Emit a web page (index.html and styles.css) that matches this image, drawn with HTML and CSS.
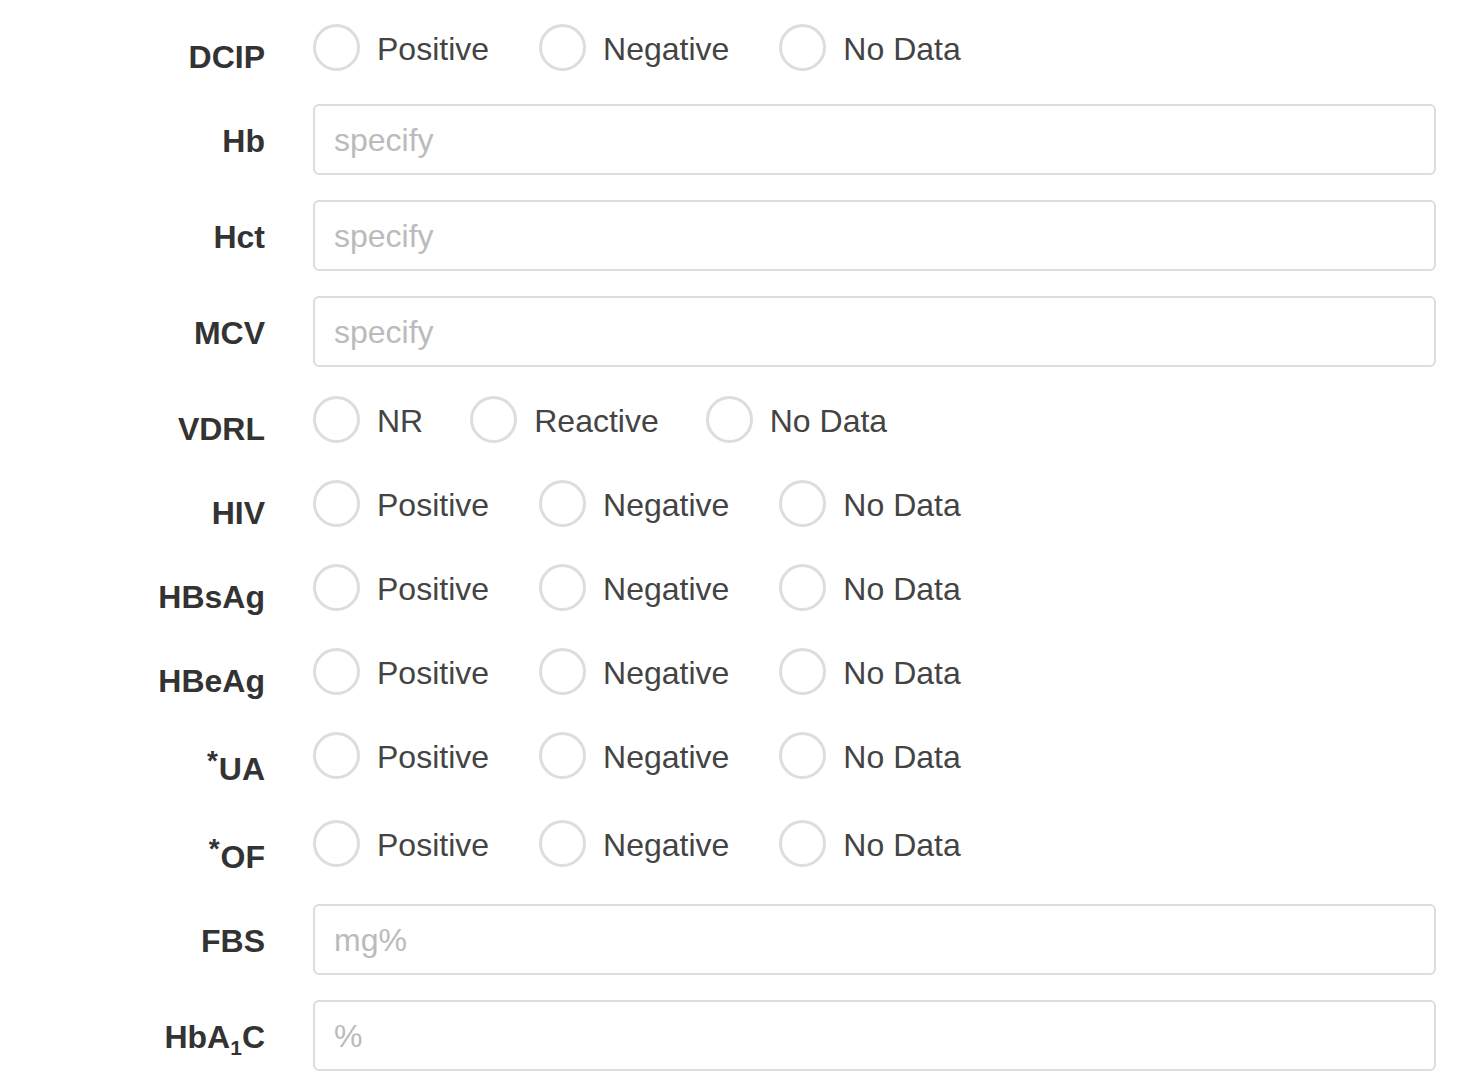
FILE: index.html
```html
<!DOCTYPE html>
<html>
<head>
<meta charset="utf-8">
<link rel="stylesheet" href="styles.css">
</head>
<body>
<form class="form">
  <div class="row row-radio">
    <div class="label">DCIP</div>
    <div class="field options">
      <label class="option"><span class="circle"></span><span class="text">Positive</span></label>
      <label class="option"><span class="circle"></span><span class="text">Negative</span></label>
      <label class="option"><span class="circle"></span><span class="text">No Data</span></label>
    </div>
  </div>
  <div class="row row-input">
    <div class="label">Hb</div>
    <div class="field"><input class="input" type="text" placeholder="specify"></div>
  </div>
  <div class="row row-input">
    <div class="label">Hct</div>
    <div class="field"><input class="input" type="text" placeholder="specify"></div>
  </div>
  <div class="row row-input">
    <div class="label">MCV</div>
    <div class="field"><input class="input" type="text" placeholder="specify"></div>
  </div>
  <div class="row row-radio">
    <div class="label">VDRL</div>
    <div class="field options options-tight">
      <label class="option"><span class="circle"></span><span class="text">NR</span></label>
      <label class="option"><span class="circle"></span><span class="text">Reactive</span></label>
      <label class="option"><span class="circle"></span><span class="text">No Data</span></label>
    </div>
  </div>
  <div class="row row-radio">
    <div class="label">HIV</div>
    <div class="field options">
      <label class="option"><span class="circle"></span><span class="text">Positive</span></label>
      <label class="option"><span class="circle"></span><span class="text">Negative</span></label>
      <label class="option"><span class="circle"></span><span class="text">No Data</span></label>
    </div>
  </div>
  <div class="row row-radio">
    <div class="label">HBsAg</div>
    <div class="field options">
      <label class="option"><span class="circle"></span><span class="text">Positive</span></label>
      <label class="option"><span class="circle"></span><span class="text">Negative</span></label>
      <label class="option"><span class="circle"></span><span class="text">No Data</span></label>
    </div>
  </div>
  <div class="row row-radio">
    <div class="label">HBeAg</div>
    <div class="field options">
      <label class="option"><span class="circle"></span><span class="text">Positive</span></label>
      <label class="option"><span class="circle"></span><span class="text">Negative</span></label>
      <label class="option"><span class="circle"></span><span class="text">No Data</span></label>
    </div>
  </div>
  <div class="row row-radio row-sup">
    <div class="label"><sup class="sup">*</sup>UA</div>
    <div class="field options">
      <label class="option"><span class="circle"></span><span class="text">Positive</span></label>
      <label class="option"><span class="circle"></span><span class="text">Negative</span></label>
      <label class="option"><span class="circle"></span><span class="text">No Data</span></label>
    </div>
  </div>
  <div class="row row-radio row-sup">
    <div class="label"><sup class="sup">*</sup>OF</div>
    <div class="field options">
      <label class="option"><span class="circle"></span><span class="text">Positive</span></label>
      <label class="option"><span class="circle"></span><span class="text">Negative</span></label>
      <label class="option"><span class="circle"></span><span class="text">No Data</span></label>
    </div>
  </div>
  <div class="row row-input">
    <div class="label">FBS</div>
    <div class="field"><input class="input" type="text" placeholder="mg%"></div>
  </div>
  <div class="row row-input">
    <div class="label">HbA<sub class="sub">1</sub>C</div>
    <div class="field"><input class="input" type="text" placeholder="%"></div>
  </div>
</form>
</body>
</html>
```
FILE: styles.css
```css
html, body {
  margin: 0;
  padding: 0;
  background: #ffffff;
}

body {
  font-family: "Liberation Sans", Arial, Helvetica, sans-serif;
  color: #333333;
}

.form {
  padding: 20px 30px 0 0;
  display: flex;
  flex-direction: column;
}

.row {
  display: flex;
  align-items: flex-start;
  gap: 48px;
}

.row-radio {
  height: 84px;
}

.row-sup {
  height: 88px;
}

.row-input {
  height: 96px;
}

.label {
  flex: 0 0 265px;
  width: 265px;
  text-align: right;
  font-size: 32px;
  font-weight: 700;
  line-height: 40px;
  padding-top: 17px;
  color: #333333;
  white-space: nowrap;
}

.row-sup .label {
  padding-top: 21px;
}

.sup {
  font-size: 28px;
  line-height: 0;
  vertical-align: 10px;
  margin-right: 1px;
}

.sub {
  font-size: 21px;
  line-height: 0;
  vertical-align: -7px;
}

.field {
  flex: 1 1 auto;
  min-width: 0;
}

.options {
  display: flex;
  align-items: flex-start;
  padding-top: 4px;
  gap: 50px;
}

.options-tight {
  gap: 47px;
}

.option {
  display: flex;
  align-items: flex-start;
  gap: 17px;
  cursor: pointer;
}

.circle {
  width: 47px;
  height: 47px;
  box-sizing: border-box;
  border: 3px solid #dddddd;
  border-radius: 50%;
  background: #ffffff;
  flex: 0 0 auto;
}

.text {
  font-size: 32px;
  line-height: 47px;
  padding-top: 2px;
  color: #444444;
  white-space: nowrap;
}

.input {
  display: block;
  width: 100%;
  height: 71px;
  box-sizing: border-box;
  margin: 0;
  border: 2px solid #dddddd;
  border-radius: 6px;
  padding: 2px 19px 0;
  font-family: "Liberation Sans", Arial, Helvetica, sans-serif;
  font-size: 32px;
  color: #444444;
  background: #ffffff;
  outline: none;
}

.input::placeholder {
  color: #bbbbbb;
  opacity: 1;
}
```
